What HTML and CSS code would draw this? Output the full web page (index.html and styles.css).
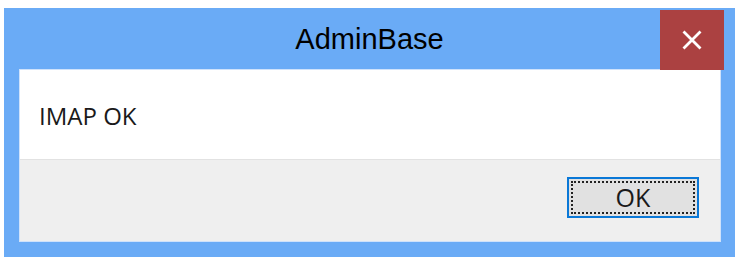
FILE: index.html
```html
<!DOCTYPE html>
<html>
<head>
<meta charset="utf-8">
<link rel="stylesheet" href="styles.css">
</head>
<body>
<div class="window">
  <div class="titlebar">
    <div class="title">AdminBase</div>
    <div class="close">
      <svg width="20" height="20" viewBox="0 0 20 20"><path d="M1.5 1.5 L18.5 18.5 M18.5 1.5 L1.5 18.5" stroke="#fff" stroke-width="2.8" stroke-linecap="butt"/></svg>
    </div>
  </div>
  <div class="content">
    <div class="message">IMAP OK</div>
    <div class="footer">
      <button class="btn"><span class="focus">OK</span></button>
    </div>
  </div>
</div>
</body>
</html>
```
FILE: styles.css
```css
html, body { margin: 0; padding: 0; background: #fff; }
body { width: 742px; height: 265px; overflow: hidden; }
.window {
  margin: 8px 0 0 4px;
  width: 731px;
  height: 249px;
  background: #6aabf6;
  display: flex;
  flex-direction: column;
  position: relative;
  box-sizing: border-box;
}
.titlebar {
  height: 61px;
  display: flex;
  align-items: center;
  justify-content: center;
}
.title {
  font-family: "Liberation Sans", Arial, sans-serif;
  font-size: 29px;
  color: #000;
  margin-top: 1px;
}
.close {
  position: absolute;
  top: 2px;
  right: 11px;
  width: 64px;
  height: 60px;
  background: #ab4141;
  display: flex;
  align-items: center;
  justify-content: center;
}
.content {
  margin: 0 14px 15px 15px;
  border: 1px solid #cfe2fb;
  flex: 1;
  display: flex;
  flex-direction: column;
  background: #fff;
}
.message {
  height: 90px;
  box-sizing: border-box;
  border-bottom: 1px solid #e2e2e2;
  padding: 30px 0 0 19px;
  font-family: "Open Sans", "Noto Sans", sans-serif;
  font-size: 24px;
  line-height: 32px;
  color: #1a1a1a;
}
.footer {
  flex: 1;
  background: #efefef;
  display: flex;
  justify-content: flex-end;
  align-items: flex-start;
  padding: 17px 21px 0 0;
}
.btn {
  width: 132px;
  height: 41px;
  border: 2px solid #0a78d7;
  background: #e1e1e1;
  padding: 2px;
  margin: 0;
  box-sizing: border-box;
  display: flex;
}
.focus {
  flex: 1;
  border: 2px dotted #222;
  display: flex;
  align-items: center;
  justify-content: center;
  font-family: "Open Sans", "Noto Sans", sans-serif;
  font-size: 25px;
  color: #1a1a1a;
  line-height: 1;
}
```
